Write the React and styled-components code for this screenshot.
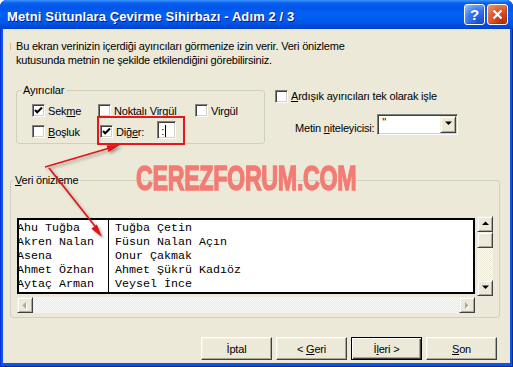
import React from 'react';
import styled, { createGlobalStyle } from 'styled-components';

const GlobalStyle = createGlobalStyle`
  html, body {
    margin: 0;
    padding: 0;
    background: #fff;
  }
  body {
    font-family: "Liberation Sans", Arial, sans-serif;
    font-size: 11px;
    letter-spacing: -0.2px;
    color: #000;
  }
`;

const Window = styled.div`
  width: 513px;
  height: 367px;
  display: flex;
  flex-direction: column;
  background: #0856e6;
  border-radius: 7px 7px 0 0;
  box-shadow: inset 1px 0 #0831d9, inset -1px 0 #002a9e, inset 0 -1px #002a9e;
  overflow: hidden;
`;

const TitleBar = styled.div`
  height: 29px;
  flex: none;
  display: flex;
  align-items: center;
  gap: 2px;
  padding: 0 5px 0 7px;
  box-sizing: border-box;
  background: linear-gradient(
    to bottom,
    #3d95ff 0,
    #0a5fef 3px,
    #0056e8 8px,
    #0361f5 14px,
    #0058ec 22px,
    #0048d6 27px,
    #003fc4 29px
  );
`;

const Title = styled.div`
  flex: 1;
  padding-top: 3px;
  color: #fff;
  font: bold 13px "Liberation Sans", Arial, sans-serif;
  letter-spacing: 0.1px;
  text-shadow: 1px 1px #0a1883;
  white-space: nowrap;
`;

const CaptionButton = styled.div`
  width: 21px;
  height: 21px;
  box-sizing: border-box;
  border: 1px solid #fff;
  border-radius: 3px;
  display: flex;
  align-items: center;
  justify-content: center;
  color: #fff;
  font: bold 15px "Liberation Sans", Arial, sans-serif;
  background: ${p => p.$danger
    ? 'radial-gradient(circle at 75% 85%, #b92f0e 0, #e05a2f 55%, #f39a7a 100%)'
    : 'radial-gradient(circle at 75% 85%, #1a4fd6 0, #3d7af0 55%, #a9c6fc 100%)'};
  box-shadow: inset -1px -1px 1px rgba(0, 0, 0, 0.2);
`;

const Body = styled.div`
  position: relative;
  flex: 1;
  margin: 0 3px 4px;
  padding: 10px 10px 0 7px;
  background: #ece9d8;
  display: flex;
  flex-direction: column;
`;

const Intro = styled.div`
  display: flex;
  line-height: 14px;
`;

const Caret = styled.span`
  flex: none;
  width: 1px;
  height: 7px;
  margin-top: 4px;
  background: #f2b36a;
`;

const IntroText = styled.div`
  margin-left: 5px;
`;

const OptionsRow = styled.div`
  display: flex;
  margin-top: 16px;
  margin-left: 6px;
`;

const Group = styled.fieldset`
  margin: 0;
  padding: 0;
  min-width: 0;
  box-sizing: border-box;
  width: ${p => p.$width}px;
  border: 1px solid #d0d0bf;
  border-radius: 3px;
`;

const GroupLegend = styled.legend`
  margin-left: ${p => p.$indent}px;
  padding: 0 2px;
  line-height: 14px;
`;

const DelimGrid = styled.div`
  display: grid;
  grid-template-columns: 66px 97px auto;
  grid-auto-rows: 17px;
  row-gap: 4px;
  padding: 5px 0 3px 15px;
`;

const CheckRow = styled.label`
  display: flex;
  align-items: center;
  gap: 3px;
  margin-left: ${p => p.$shift || 0}px;
  line-height: 14px;
  white-space: nowrap;
`;

const Box = styled.span`
  flex: none;
  width: 13px;
  height: 13px;
  box-sizing: border-box;
  background: #fff;
  border: 1px solid;
  border-color: #808080 #fff #fff #808080;
  box-shadow: inset 1px 1px #404040, inset -1px -1px #d4d0c8;
  display: flex;
  align-items: center;
  justify-content: center;
`;

const SmallField = styled.span`
  align-self: flex-start;
  margin: -2px 0 0 10px;
  width: 19px;
  height: 18px;
  box-sizing: border-box;
  background: #fff;
  border: 1px solid;
  border-color: #808080 #fff #fff #808080;
  box-shadow: inset 1px 1px #404040, inset -1px -1px #d4d0c8;
  padding: 1px 0 0 3px;
  line-height: 14px;
  display: flex;
  align-items: center;
  gap: 1px;
`;

const TextCaret = styled.span`
  width: 1px;
  height: 12px;
  background: #000;
`;

const RightCol = styled.div`
  display: flex;
  flex-direction: column;
  margin-left: 10px;
  padding-top: 6px;
`;

const QualifierRow = styled.div`
  display: flex;
  align-items: flex-end;
  gap: 3px;
  margin-top: 11px;
  padding-left: 20px;
`;

const QualifierLabel = styled.span`
  line-height: 14px;
`;

const Combo = styled.div`
  width: 81px;
  height: 21px;
  box-sizing: border-box;
  display: flex;
  background: #fff;
  border: 1px solid;
  border-color: #808080 #fff #fff #808080;
  box-shadow: inset 1px 1px #404040, inset -1px -1px #d4d0c8;
  padding: 1px;
`;

const ComboValue = styled.span`
  flex: 1;
  padding: 0 0 0 3px;
  line-height: 12px;
`;

const RaisedButton = styled.div`
  flex: none;
  width: ${p => p.$w || 16}px;
  height: ${p => p.$h || 16}px;
  box-sizing: border-box;
  background: #ece9d8;
  border: 1px solid;
  border-color: #f1efe2 #404040 #404040 #f1efe2;
  box-shadow: inset 1px 1px #fff, inset -1px -1px #aca899;
  display: flex;
  align-items: center;
  justify-content: center;
`;

const PreviewGroupWrap = styled.div`
  margin-top: 29px;
`;

const PreviewGrid = styled.div`
  display: grid;
  grid-template-columns: 458px 16px;
  grid-template-rows: 80px 16px;
  column-gap: 2px;
  row-gap: 1px;
  padding: 29px 6px 4px 6px;
`;

const PreviewBox = styled.div`
  margin: 2px 0;
  box-sizing: border-box;
  border: 2px solid #000;
  background: #fff;
  display: flex;
  overflow: hidden;
  font-family: "Liberation Mono", "Courier New", monospace;
  font-size: 11.67px;
  letter-spacing: 0;
  line-height: 14px;
  padding-top: 1px;
`;

const PreviewCol = styled.div`
  flex: none;
  width: ${p => p.$width ? `${p.$width}px` : 'auto'};
  margin-top: -1px;
  padding-top: 1px;
  margin-left: ${p => p.$first ? -2 : 0}px;
  padding-left: ${p => p.$first ? 0 : 6}px;
  border-left: ${p => p.$first ? 'none' : '1px solid #000'};
  white-space: pre;
`;

const VScroll = styled.div`
  display: flex;
  flex-direction: column;
`;

const HScroll = styled.div`
  display: flex;
`;

const Track = styled.div`
  flex: 1;
  background-color: #fff;
  background-image: repeating-conic-gradient(#ece9d8 0 25%, #fcfcfa 0 50%);
  background-size: 2px 2px;
`;

const ButtonRow = styled.div`
  display: flex;
  justify-content: flex-end;
  gap: 4px;
  margin-top: 19px;
  padding-right: 3px;
`;

const Button = styled.button`
  width: 71px;
  height: 23px;
  box-sizing: border-box;
  padding: 0;
  font: 11px "Liberation Sans", Arial, sans-serif;
  letter-spacing: -0.2px;
  color: #000;
  background: #ece9d8;
  border: 1px solid;
  border-color: ${p => p.$default ? '#000' : '#fff #404040 #404040 #fff'};
  box-shadow: ${p => p.$default
    ? 'inset 1px 1px #fff, inset -1px -1px #404040, inset -2px -2px #aca899'
    : 'inset -1px -1px #aca899, inset 1px 1px #f1efe2'};
`;

const Callout = styled.div`
  position: absolute;
  left: 94px;
  top: 87px;
  width: 88px;
  height: 29px;
  box-sizing: border-box;
  border: 2px solid #e4191b;
  pointer-events: none;
`;

const Watermark = styled.div`
  position: absolute;
  left: 133px;
  top: 131px;
  font: bold 35px/35px "Liberation Sans", Arial, sans-serif;
  letter-spacing: -0.5px;
  color: #f27c74;
  -webkit-text-stroke: 1.4px #f27c74;
  white-space: nowrap;
  transform: scaleX(0.665);
  transform-origin: 0 0;
  pointer-events: none;
`;

const ArrowLayer = styled.svg`
  position: absolute;
  left: 0;
  top: 0;
  width: 507px;
  height: 334px;
  pointer-events: none;
  filter: drop-shadow(2px 2px 1.5px rgba(0, 0, 0, 0.35));
`;

const Check = () => (
  <svg width="9" height="9" viewBox="0 0 9 9">
    <polyline points="1,4 3.2,6.3 8,1.5" fill="none" stroke="#000" strokeWidth="2" />
  </svg>
);

const CheckBox = ({ checked }) => <Box>{checked && <Check />}</Box>;

const Arrow = ({ dir, disabled }) => {
  const fill = disabled ? '#aca899' : '#000';
  const shapes = {
    up: '1,5 4.5,1.5 8,5',
    down: '1,1.5 4.5,5 8,1.5',
    left: '5,1 1.5,4.5 5,8',
    right: '2,1 5.5,4.5 2,8',
  };
  return (
    <svg width="9" height="9" viewBox="0 0 9 9">
      {disabled && <polygon points={shapes[dir]} fill="#fff" transform="translate(1 1)" />}
      <polygon points={shapes[dir]} fill={fill} />
    </svg>
  );
};

const arrowPath = (x1, y1, x2, y2) => {
  const a = Math.atan2(y2 - y1, x2 - x1);
  const len = 13;
  const w = 3.5;
  const bx = x2 - len * Math.cos(a);
  const by = y2 - len * Math.sin(a);
  const px = -Math.sin(a) * w;
  const py = Math.cos(a) * w;
  return `${x2},${y2} ${bx + px},${by + py} ${bx - px},${by - py}`;
};

const leftNames = ['Ahu Tuğba', 'Akren Nalan', 'Asena', 'Ahmet Özhan', 'Aytaç Arman'];
const rightNames = ['Tuğba Çetin', 'Füsun Nalan Açın', 'Onur Çakmak', 'Ahmet Şükrü Kadıöz', 'Veysel İnce'];

export default function App() {
  return (
    <>
      <GlobalStyle />
      <Window>
        <TitleBar>
          <Title>Metni Sütunlara Çevirme Sihirbazı - Adım 2 / 3</Title>
          <CaptionButton>?</CaptionButton>
          <CaptionButton $danger>
            <svg width="11" height="11" viewBox="0 0 11 11">
              <path d="M1.5 1.5 L9.5 9.5 M9.5 1.5 L1.5 9.5" stroke="#fff" strokeWidth="2.2" />
            </svg>
          </CaptionButton>
        </TitleBar>

        <Body>
          <Intro>
            <Caret />
            <IntroText>
              Bu ekran verinizin içerdiği ayırıcıları görmenize izin verir. Veri önizleme
              <br />
              kutusunda metnin ne şekilde etkilendiğini görebilirsiniz.
            </IntroText>
          </Intro>

          <OptionsRow>
            <Group $width={249}>
              <GroupLegend $indent={4}>Ayırıcılar</GroupLegend>
              <DelimGrid>
                <CheckRow><CheckBox checked /><span>Sek<u>m</u>e</span></CheckRow>
                <CheckRow><CheckBox /><span>Noktalı Virgül</span></CheckRow>
                <CheckRow><CheckBox /><span>Vir<u>g</u>ül</span></CheckRow>
                <CheckRow><CheckBox /><span><u>B</u>oşluk</span></CheckRow>
                <CheckRow $shift={2}>
                  <CheckBox checked />
                  <span>Diğ<u>e</u>r:</span>
                  <SmallField>:<TextCaret /></SmallField>
                </CheckRow>
              </DelimGrid>
            </Group>

            <RightCol>
              <CheckRow>
                <CheckBox />
                <span><u>A</u>rdışık ayırıcıları tek olarak işle</span>
              </CheckRow>
              <QualifierRow>
                <QualifierLabel>Metin <u>n</u>iteleyicisi:</QualifierLabel>
                <Combo>
                  <ComboValue>"</ComboValue>
                  <RaisedButton $w={16} $h={17}><Arrow dir="down" /></RaisedButton>
                </Combo>
              </QualifierRow>
            </RightCol>
          </OptionsRow>

          <PreviewGroupWrap>
            <Group $width={490}>
              <GroupLegend $indent={2}><u>V</u>eri önizleme</GroupLegend>
              <PreviewGrid>
                <PreviewBox>
                  <PreviewCol $first $width={91}>{leftNames.join('\n')}</PreviewCol>
                  <PreviewCol>{rightNames.join('\n')}</PreviewCol>
                </PreviewBox>
                <VScroll>
                  <RaisedButton><Arrow dir="up" /></RaisedButton>
                  <RaisedButton />
                  <Track />
                  <RaisedButton><Arrow dir="down" /></RaisedButton>
                </VScroll>
                <HScroll>
                  <RaisedButton><Arrow dir="left" disabled /></RaisedButton>
                  <Track />
                  <RaisedButton><Arrow dir="right" disabled /></RaisedButton>
                </HScroll>
              </PreviewGrid>
            </Group>
          </PreviewGroupWrap>

          <ButtonRow>
            <Button>İptal</Button>
            <Button>&lt; <u>G</u>eri</Button>
            <Button $default>İ<u>l</u>eri &gt;</Button>
            <Button><u>S</u>on</Button>
          </ButtonRow>

          <Callout />
          <Watermark>CEREZFORUM.COM</Watermark>
          <ArrowLayer viewBox="0 0 507 334">
            <line x1="42" y1="138" x2="110" y2="118" stroke="#e01414" strokeWidth="1.6" />
            <polygon points={arrowPath(42, 138, 117, 116)} fill="#e01414" />
            <line x1="46" y1="139" x2="95" y2="201" stroke="#e01414" strokeWidth="1.6" />
            <polygon points={arrowPath(46, 139, 99, 208)} fill="#e01414" />
          </ArrowLayer>
        </Body>
      </Window>
    </>
  );
}
